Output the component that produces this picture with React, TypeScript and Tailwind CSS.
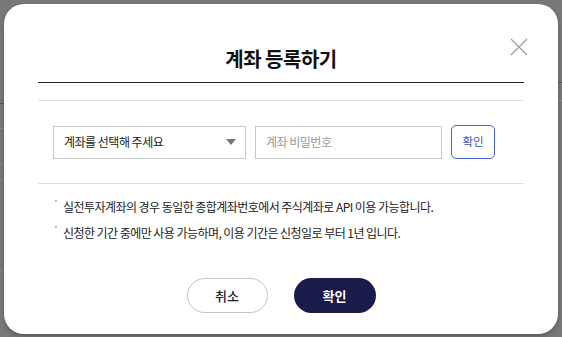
import React from "react";

export default function App() {
  const font = { fontFamily: '"Noto Sans CJK KR", "Noto Sans", sans-serif' };
  return (
    <div className="relative w-[562px] h-[337px] overflow-hidden bg-[#787878]" style={font}>
      {/* faint page lines behind overlay */}
      <div className="absolute left-0 top-[103px] w-[6px] h-px bg-[#555]" />
      <div className="absolute left-0 top-[128px] w-[6px] h-px bg-[#8a8a8a]" />
      <div className="absolute left-0 top-[163px] w-[6px] h-px bg-[#8a8a8a]" />
      <div className="absolute left-0 top-[180px] w-[6px] h-px bg-[#8a8a8a]" />
      <div className="absolute left-0 top-[270px] w-[6px] h-px bg-[#8a8a8a]" />
      <div className="absolute right-0 top-[82px] w-[6px] h-px bg-[#555]" />
      <div className="absolute right-0 top-[100px] w-[6px] h-px bg-[#8a8a8a]" />

      <div className="absolute left-[4px] top-[4px] w-[554px] h-[330px] bg-white rounded-[20px] shadow-[0_2px_4px_rgba(0,0,0,0.25)] flex flex-col">
        <div className="relative h-[78px] flex items-end justify-center pb-[13px]">
          <h1 className="text-[20px] font-bold text-[#111] leading-none tracking-[-0.5px]">계좌 등록하기</h1>
          <button className="absolute left-[506px] top-[34px] w-[18px] h-[18px]">
            <svg width="18" height="18" viewBox="0 0 18 18">
              <path d="M1 1L17 17M17 1L1 17" stroke="#9a9a9a" strokeWidth="1.1" fill="none" />
            </svg>
          </button>
        </div>
        <div className="mx-[34px] h-px bg-[#222]" />
        <div className="mx-[34px] mt-[17px] h-px bg-[#dedede]" />
        <div className="flex items-center gap-[9px] pl-[49px] mt-[24px]">
          <div className="w-[193px] h-[33px] border border-[#c8c8c8] flex items-center justify-between pl-[10px] pr-[9px]">
            <span className="text-[12px] text-[#222] tracking-[-0.5px]">계좌를 선택해 주세요</span>
            <svg width="10" height="6" viewBox="0 0 10 6"><path d="M0 0H10L5 6Z" fill="#777" /></svg>
          </div>
          <div className="w-[187px] h-[33px] border border-[#c8c8c8] flex items-center pl-[10px]">
            <span className="text-[12px] text-[#9a9a9a] tracking-[-0.5px]">계좌 비밀번호</span>
          </div>
          <button className="w-[44px] h-[34px] border border-[#4a5fd6] rounded-[5px] text-[11.5px] text-[#3f4fc4] flex items-center justify-center">확인</button>
        </div>
        <div className="mx-[34px] mt-[24px] h-px bg-[#dedede]" />
        <div className="pl-[50px] mt-[14px] flex flex-col gap-[9px] text-[12px] text-[#222] tracking-[-0.55px]">
          <div className="flex items-start">
            <span className="text-[8px] text-[#999] w-[9px] leading-none mt-[1px]">*</span>
            <span className="leading-[17px]">실전투자계좌의 경우 동일한 종합계좌번호에서 주식계좌로 API 이용 가능합니다.</span>
          </div>
          <div className="flex items-start">
            <span className="text-[8px] text-[#999] w-[9px] leading-none mt-[1px]">*</span>
            <span className="leading-[17px]">신청한 기간 중에만 사용 가능하며, 이용 기간은 신청일로 부터 1년 입니다.</span>
          </div>
        </div>
        <div className="flex justify-center gap-[26px] mt-[37px]">
          <button className="w-[81px] h-[35px] rounded-full border border-[#c4c4c4] bg-white text-[13px] font-medium text-[#222]">취소</button>
          <button className="w-[82px] h-[35px] rounded-full bg-[#1b1b4b] text-[13px] font-bold text-white">확인</button>
        </div>
      </div>
    </div>
  );
}
